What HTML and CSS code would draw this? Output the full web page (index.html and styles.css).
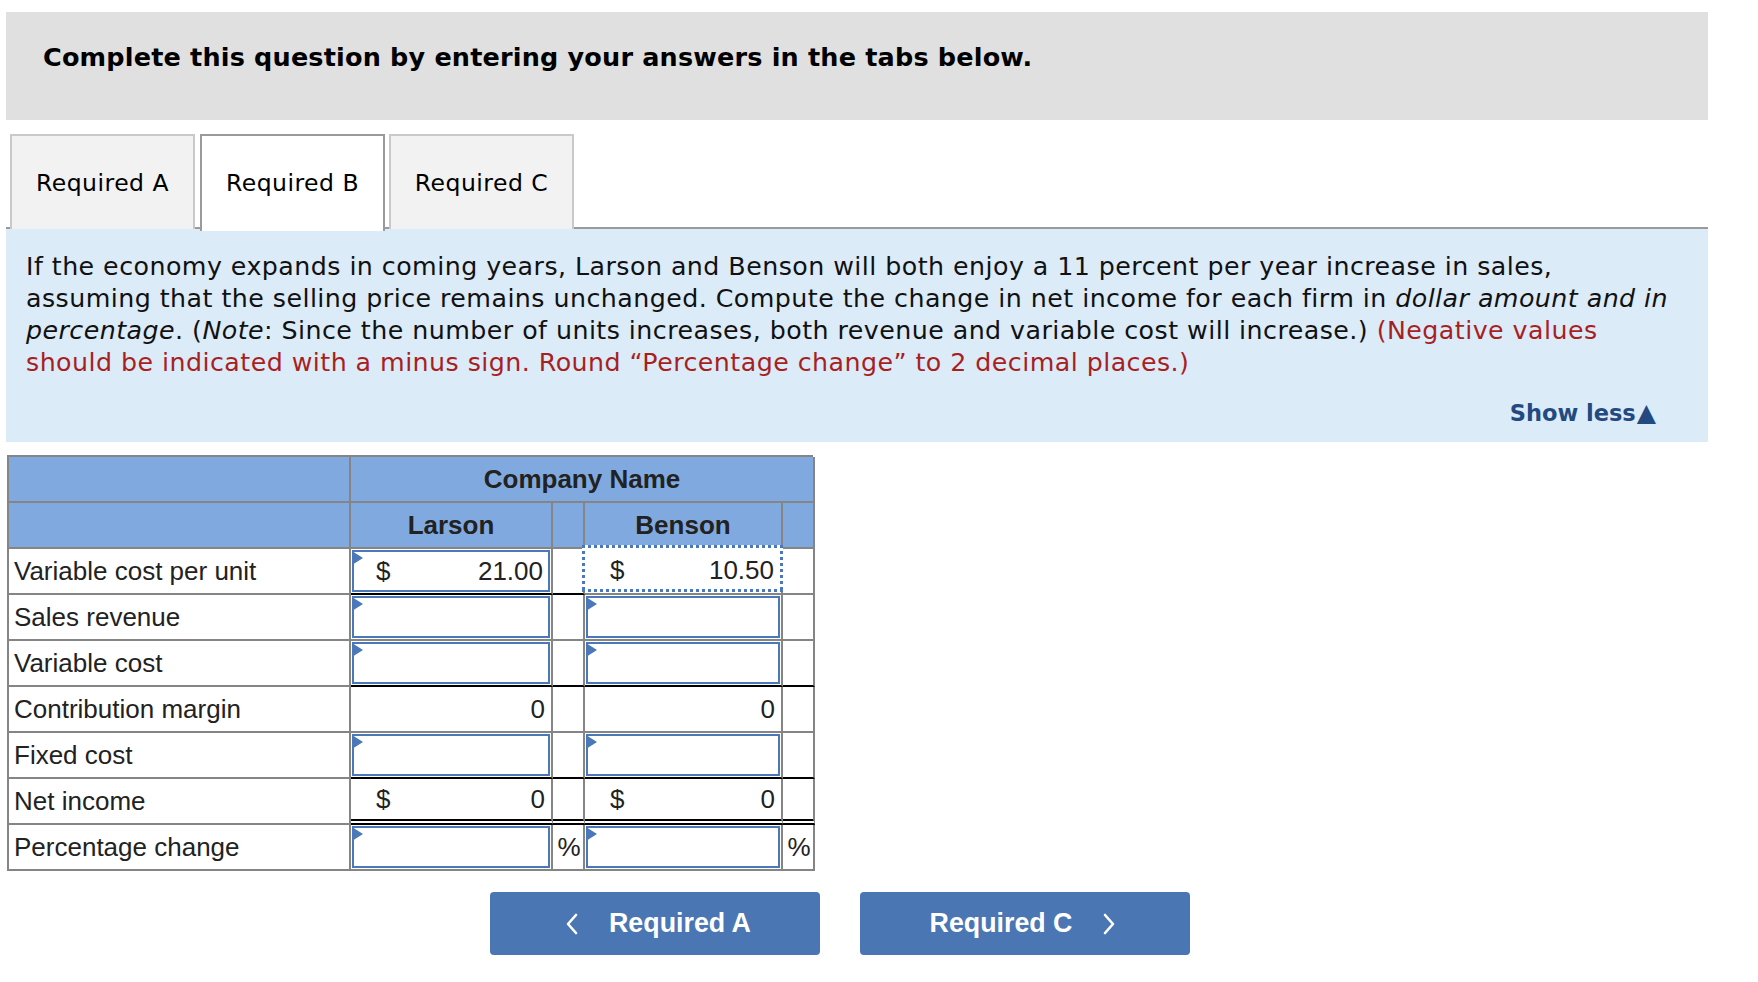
FILE: index.html
```html
<!DOCTYPE html>
<html lang="en">
<head>
<meta charset="utf-8">
<title>Required B</title>
<link rel="stylesheet" href="styles.css">
</head>
<body>
<div class="page">
  <div class="banner">
    <h1>Complete this question by entering your answers in the tabs below.</h1>
  </div>

  <div class="tabs">
    <div class="tab">Required A</div>
    <div class="tab active">Required B</div>
    <div class="tab tab-c">Required C</div>
  </div>

  <div class="prompt">
    <p>If the economy expands in coming years, Larson and Benson will both enjoy a 11 percent per year increase in sales, assuming that the selling price remains unchanged. Compute the change in net income for each firm in <em>dollar amount and in percentage</em>. (<em>Note</em>: Since the number of units increases, both revenue and variable cost will increase.) <span class="warn">(Negative values should be indicated with a minus sign. Round “Percentage change” to 2 decimal places.)</span></p>
    <div class="showless">Show less<span class="tri">▲</span></div>
  </div>

  <div class="grid">
    <div class="cell head"></div>
    <div class="cell head span4">Company Name</div>

    <div class="cell head"></div>
    <div class="cell head">Larson</div>
    <div class="cell head"></div>
    <div class="cell head">Benson</div>
    <div class="cell head"></div>

    <div class="cell label">Variable cost per unit</div>
    <div class="cell val tot"><div class="inp"><span class="cur">$</span><span class="num">21.00</span></div></div>
    <div class="cell gap tot"></div>
    <div class="cell val"><div class="focus"><span class="cur">$</span><span class="num">10.50</span></div></div>
    <div class="cell gap"></div>

    <div class="cell label">Sales revenue</div>
    <div class="cell val"><div class="inp"></div></div>
    <div class="cell gap"></div>
    <div class="cell val"><div class="inp"></div></div>
    <div class="cell gap"></div>

    <div class="cell label">Variable cost</div>
    <div class="cell val tot"><div class="inp"></div></div>
    <div class="cell gap tot"></div>
    <div class="cell val tot"><div class="inp"></div></div>
    <div class="cell gap tot"></div>

    <div class="cell label">Contribution margin</div>
    <div class="cell val"><div class="plain"><span class="num">0</span></div></div>
    <div class="cell gap"></div>
    <div class="cell val"><div class="plain"><span class="num">0</span></div></div>
    <div class="cell gap"></div>

    <div class="cell label">Fixed cost</div>
    <div class="cell val tot"><div class="inp"></div></div>
    <div class="cell gap tot"></div>
    <div class="cell val tot"><div class="inp"></div></div>
    <div class="cell gap tot"></div>

    <div class="cell label">Net income</div>
    <div class="cell val dbl"><div class="plain"><span class="cur">$</span><span class="num">0</span></div></div>
    <div class="cell gap dbl"></div>
    <div class="cell val dbl"><div class="plain"><span class="cur">$</span><span class="num">0</span></div></div>
    <div class="cell gap dbl"></div>

    <div class="cell label">Percentage change</div>
    <div class="cell val"><div class="inp"></div></div>
    <div class="cell gap pct">%</div>
    <div class="cell val"><div class="inp"></div></div>
    <div class="cell gap pct">%</div>
  </div>

  <div class="nav">
    <button class="btn btn-prev" type="button">
      <svg class="chev" width="14" height="22" viewBox="0 0 14 22"><path d="M11 2 L3 11 L11 20" fill="none" stroke="#fff" stroke-width="2.6" stroke-linecap="round" stroke-linejoin="round"/></svg>
      <span>Required A</span>
    </button>
    <button class="btn btn-next" type="button">
      <span>Required C</span>
      <svg class="chev" width="14" height="22" viewBox="0 0 14 22"><path d="M3 2 L11 11 L3 20" fill="none" stroke="#fff" stroke-width="2.6" stroke-linecap="round" stroke-linejoin="round"/></svg>
    </button>
  </div>
</div>
</body>
</html>
```

FILE: styles.css
```css
* { box-sizing: border-box; }

body {
  margin: 0;
  background: #fff;
  color: #000;
}

.page {
  width: 1708px;
  padding: 12px 0 0 6px;
}

.banner {
  height: 108px;
  background: #e0e0e0;
  padding: 29px 0 0 37px;
}

.banner h1 {
  margin: 0;
  font-family: "DejaVu Sans", Verdana, sans-serif;
  font-weight: bold;
  font-size: 25.5px;
  line-height: 32px;
  letter-spacing: 0.18px;
  color: #000;
}

.tabs {
  margin-top: 14px;
  display: flex;
  gap: 5px;
  padding-left: 4px;
  border-bottom: 2px solid #9a9a9a;
  height: 95px;
}

.tab {
  width: 185px;
  height: 95px;
  background: #f2f2f2;
  border: 2px solid #c9c9c9;
  border-bottom: none;
  display: flex;
  align-items: center;
  justify-content: center;
  font-family: "DejaVu Sans", Verdana, sans-serif;
  font-size: 23.5px;
  letter-spacing: 0.5px;
  color: #000;
}

.tab.active {
  background: #fff;
  border-color: #9a9a9a;
  height: 97px;
  margin-bottom: -2px;
  padding-bottom: 2px;
}

.tab-c { margin-left: -1px; }

.prompt {
  background: #dcebf8;
  padding: 22px 26px 14px 20px;
}

.prompt p {
  margin: 0;
  font-family: "DejaVu Sans", Verdana, sans-serif;
  font-size: 25.3px;
  letter-spacing: 0.45px;
  line-height: 32px;
  color: #111;
}

.prompt em { font-style: italic; }

.warn { color: #a81f1f; }

.showless {
  margin-top: 19px;
  text-align: right;
  padding-right: 26px;
  font-family: "DejaVu Sans", Verdana, sans-serif;
  font-weight: bold;
  font-size: 22.5px;
  line-height: 30px;
  color: #234a80;
}

.showless .tri {
  font-size: 25px;
  line-height: 20px;
  margin-left: 1px;
}

.grid {
  margin: 13px 0 0 1px;
  display: grid;
  grid-template-columns: 342px 202px 32px 198px 32px;
  grid-auto-rows: 46px;
  width: 806px;
  border-top: 2px solid #858585;
  border-left: 2px solid #858585;
  font-family: "Liberation Sans", Arial, sans-serif;
  font-size: 26px;
  color: #222;
}

.cell {
  border-right: 2px solid #858585;
  border-bottom: 2px solid #858585;
  display: flex;
  align-items: center;
  min-width: 0;
}

.head {
  background: #80aadf;
  justify-content: center;
  font-weight: bold;
}

.span4 { grid-column: 2 / 6; }

.label {
  padding-left: 5px;
  background: #fff;
}

.val {
  padding: 1px;
  align-items: stretch;
}

.tot { border-bottom-color: #000; }

.dbl { border-bottom: 6px double #000; }

.inp, .plain, .focus {
  flex: 1;
  position: relative;
  display: flex;
  align-items: center;
  justify-content: space-between;
}

.inp {
  border: 2px solid #4a78b8;
  padding: 0 5px 0 22px;
}

.inp::before {
  content: "";
  position: absolute;
  left: -2px;
  top: -1px;
  width: 0;
  height: 0;
  border-left: 11px solid #4a78b8;
  border-top: 7px solid transparent;
  border-bottom: 7px solid transparent;
}

.plain {
  padding: 0 5px 0 24px;
}

.focus {
  margin: -5px -3px 0 -4px;
  padding: 3px 9px 0 28px;
  background:
    repeating-linear-gradient(90deg, #4a78b8 0 3px, transparent 3px 6px) left top / 100% 3px no-repeat,
    repeating-linear-gradient(90deg, #4a78b8 0 3px, transparent 3px 6px) left bottom / 100% 3px no-repeat,
    repeating-linear-gradient(180deg, #4a78b8 0 3px, transparent 3px 6px) left top / 3px 100% no-repeat,
    repeating-linear-gradient(180deg, #4a78b8 0 3px, transparent 3px 6px) right top / 3px 100% no-repeat,
    #fff;
}

.num { margin-left: auto; }

.pct {
  justify-content: center;
  padding-left: 2px;
}

.nav {
  margin-top: 21px;
  padding-left: 484px;
  display: flex;
  gap: 40px;
}

.btn {
  width: 330px;
  height: 63px;
  background: #4a76b4;
  border: none;
  border-radius: 4px;
  color: #fff;
  font-family: "Liberation Sans", Arial, sans-serif;
  font-weight: bold;
  font-size: 26.8px;
  display: flex;
  align-items: center;
  justify-content: center;
  gap: 30px;
  padding: 0;
}

.btn-prev { padding-left: 6px; }
.btn-next { padding-right: 4px; }

.chev { display: block; }
```
